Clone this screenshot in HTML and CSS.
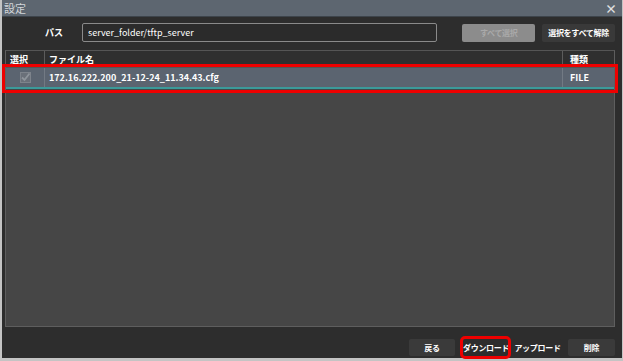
FILE: index.html
```html
<!DOCTYPE html>
<html lang="ja">
  <head>
    <meta charset="UTF-8" />
    <meta name="viewport" content="width=device-width, initial-scale=1.0" />
    <title>設定</title>
    <link rel="stylesheet" href="styles.css">
  </head>
  <body>
    <div class="window">
      <div class="titlebar">
        <span class="title">設定</span>
        <span class="close">×</span>
      </div>
      <div class="content">
        <div class="path-row">
          <label class="path-label" for="path">パス</label>
          <input id="path" class="path-input" type="text" value="server_folder/tftp_server" />
          <button class="btn btn-disabled" disabled>すべて選択</button>
          <button class="btn btn-clear">選択をすべて解除</button>
        </div>
        <div class="table">
          <div class="row head">
            <div class="cell c-sel">選択</div>
            <div class="cell c-name">ファイル名</div>
            <div class="cell c-type">種類</div>
          </div>
          <div class="row selected">
            <div class="cell c-sel">
              <span class="check">
                <svg width="11" height="11" viewBox="0 0 11 11">
                  <rect x="0.5" y="0.5" width="10" height="10" fill="#6a7079" stroke="#7d838b" />
                  <path d="M2 5.5 L4.5 8 L9.5 1.5" fill="none" stroke="#8f959c" stroke-width="1.8" />
                </svg>
              </span>
            </div>
            <div class="cell c-name">172.16.222.200_21-12-24_11.34.43.cfg</div>
            <div class="cell c-type">FILE</div>
          </div>
        </div>
        <div class="actions">
          <button class="btn act">戻る</button>
          <button class="btn act marked">ダウンロード</button>
          <button class="btn act">アップロード</button>
          <button class="btn act">削除</button>
        </div>
      </div>
    </div>
  </body>
</html>
```

FILE: styles.css
```css
* {
  margin: 0;
  padding: 0;
  box-sizing: border-box;
}
body {
  width: 623px;
  height: 361px;
  background-color: #c4c4c4;
  font-family: "Noto Sans CJK JP", "Noto Sans", sans-serif;
  font-size: 9px;
  color: #fff;
  overflow: hidden;
}
.window {
  margin: 0 1px 0 2px;
  height: 358px;
  display: flex;
  flex-direction: column;
  background-color: #2d2d2d;
}
.titlebar {
  height: 17px;
  background-color: #5d6670;
  display: flex;
  align-items: center;
  justify-content: space-between;
  padding: 0 5px 0 2px;
  border-bottom: 1px solid #3d444b;
}
.title {
  color: #d2d6da;
  font-size: 11px;
}
.close {
  font-size: 12px;
  font-weight: bold;
  color: #e0e0e0;
}
.content {
  flex: 1;
  display: flex;
  flex-direction: column;
  padding: 6px 7px 2px 3px;
}
.path-row {
  display: flex;
  align-items: center;
  height: 19px;
}
.path-label {
  width: 77px;
  padding-left: 40px;
  font-weight: bold;
}
.path-input {
  width: 356px;
  height: 19px;
  background-color: #2b2b2b;
  border: 1px solid #8a8a8a;
  border-radius: 2px;
  color: #fff;
  font-family: inherit;
  font-size: 9px;
  padding: 0 5px;
}
.btn {
  height: 18px;
  padding: 0;
  border: none;
  border-radius: 2px;
  background-color: #3a3a3a;
  color: #fff;
  font-family: inherit;
  font-size: 8px;
  font-weight: bold;
  white-space: nowrap;
  letter-spacing: -0.3px;
}
.btn-disabled {
  width: 73px;
  margin-left: 25px;
  background-color: #8c8c8c;
  color: #a9a9a9;
}
.btn-clear {
  width: 73px;
  margin-left: 7px;
  background-color: #393939;
}
.table {
  margin-top: 8px;
  height: 277px;
  background-color: #464646;
  border: 1px solid #5e5e5e;
  border-top-color: #555;
}
.row {
  display: flex;
}
.head {
  height: 17px;
  background-color: #2f2f2f;
  border-bottom: 1px solid #555;
}
.cell {
  display: flex;
  align-items: center;
  padding-left: 4px;
  font-weight: bold;
}
.c-sel {
  width: 39px;
  border-right: 1px solid #5c5c5c;
}
.c-name {
  flex: 1;
}
.c-type {
  width: 52px;
  border-left: 1px solid #5c5c5c;
  padding-left: 7px;
}
.selected {
  height: 21px;
  background-color: #5b6470;
  border-bottom: 2px solid #3b9a9a;
  outline: 3px solid #ee0000;
  outline-offset: 1px;
}
.selected .c-sel {
  justify-content: center;
  padding-left: 0;
  border-right-color: #727a84;
}
.selected .c-type {
  border-left-color: #727a84;
}
.check {
  display: flex;
}
.actions {
  margin-top: auto;
  display: flex;
  justify-content: flex-end;
}
.act {
  height: 17px;
}
.act:nth-child(1) {
  width: 46px;
}
.act:nth-child(2) {
  width: 45px;
  margin-left: 8px;
  outline: 3px solid #ee0000;
  background-color: #2d2d2d;
}
.act:nth-child(3) {
  width: 47px;
  margin-left: 6px;
  background-color: #2d2d2d;
}
.act:nth-child(4) {
  width: 47px;
  margin-left: 7px;
}
```
